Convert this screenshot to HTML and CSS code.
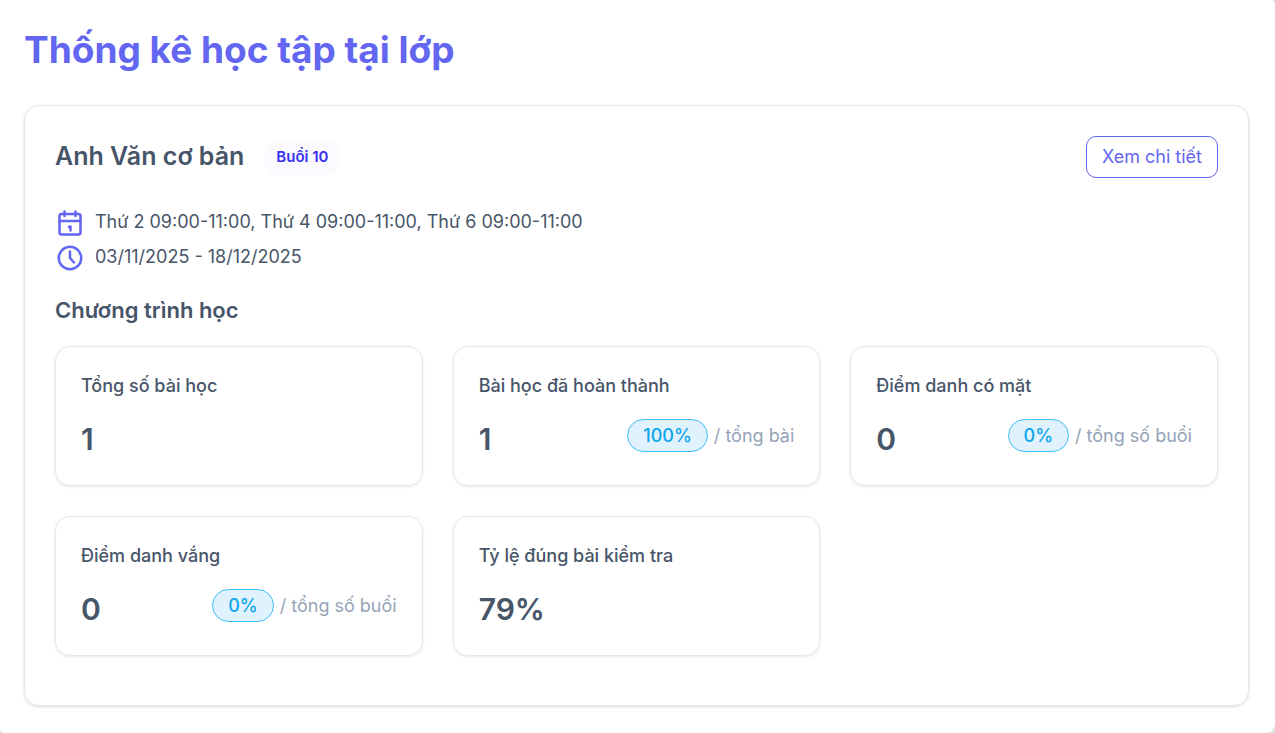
FILE: index.html
```html
<!DOCTYPE html>
<html lang="vi">

<head>
    <meta charset="UTF-8">
    <meta name="viewport" content="width=device-width, initial-scale=1.0">
    <title>Thống kê học tập tại lớp</title>
    <link rel="stylesheet" href="styles.css">
</head>

<body>
    <main class="page">
        <h1 class="page-title">Thống kê học tập tại lớp</h1>

        <section class="course">
            <div class="course-header">
                <h2 class="course-name">Anh Văn cơ bản</h2>
                <span class="session">Buổi 10</span>
                <button type="button" class="detail-btn">Xem chi tiết</button>
            </div>

            <ul class="schedule">
                <li>
                    <svg class="icon" viewBox="0 0 30 30" fill="none" stroke="currentColor" stroke-width="2.5" stroke-linecap="round" stroke-linejoin="round">
                        <rect x="4.5" y="6" width="21" height="20.5" rx="2" />
                        <path d="M4.5 13h21M9.5 3.500v4.500M20.500 3.500v4.500M14 19l1.500-.5v4" />
                    </svg>
                    <span>Thứ 2 09:00-11:00, Thứ 4 09:00-11:00, Thứ 6 09:00-11:00</span>
                </li>
                <li>
                    <svg class="icon" viewBox="0 0 30 30" fill="none" stroke="currentColor" stroke-width="2.5" stroke-linecap="round" stroke-linejoin="round">
                        <circle cx="15" cy="15" r="11.25" />
                        <path d="M15 8.500v6.500l4 4.500" />
                    </svg>
                    <span>03/11/2025 - 18/12/2025</span>
                </li>
            </ul>

            <h3 class="section-title">Chương trình học</h3>

            <div class="stats">
                <div class="stat">
                    <p class="stat-label">Tổng số bài học</p>
                    <div class="stat-row">
                        <span class="stat-value">1</span>
                    </div>
                </div>
                <div class="stat">
                    <p class="stat-label">Bài học đã hoàn thành</p>
                    <div class="stat-row">
                        <span class="stat-value">1</span>
                        <div class="ratio"><span class="percent">100%</span><span>/ tổng bài</span></div>
                    </div>
                </div>
                <div class="stat">
                    <p class="stat-label">Điểm danh có mặt</p>
                    <div class="stat-row">
                        <span class="stat-value">0</span>
                        <div class="ratio"><span class="percent">0%</span><span>/ tổng số buổi</span></div>
                    </div>
                </div>
                <div class="stat">
                    <p class="stat-label">Điểm danh vắng</p>
                    <div class="stat-row">
                        <span class="stat-value">0</span>
                        <div class="ratio"><span class="percent">0%</span><span>/ tổng số buổi</span></div>
                    </div>
                </div>
                <div class="stat">
                    <p class="stat-label">Tỷ lệ đúng bài kiểm tra</p>
                    <div class="stat-row">
                        <span class="stat-value">79%</span>
                    </div>
                </div>
            </div>
        </section>
    </main>
</body>

</html>
```
FILE: styles.css
```css
* {
    box-sizing: border-box;
}

body {
    margin: 0;
    background: #e5e5e5;
    color: #475569;
    font-family: Inter, "Noto Sans", sans-serif;
    font-size: 18px;
    line-height: 25px;
}

h1,
h2,
h3,
p,
ul {
    margin: 0;
    padding: 0;
}

.page {
    min-height: 100vh;
    padding: 25px 26px 26px 24px;
    background: #fff;
    border-radius: 0 5px 10px 5px;
}

.page-title {
    margin-bottom: 30px;
    color: #6366f1;
    font-size: 37px;
    font-weight: 700;
    line-height: 50px;
}

.course {
    padding: 30px 30px 49px;
    border: 1px solid #e5e7eb;
    border-radius: 15px;
    box-shadow: 0 1px 3px rgba(0, 0, 0, .15);
}

.course-header {
    display: flex;
    align-items: center;
    margin-bottom: 30px;
}

.course-name {
    padding-bottom: 2px;
    font-size: 25px;
    font-weight: 600;
    line-height: 30px;
}

.session {
    margin-left: 20px;
    padding: 5px 12px 7px;
    border-radius: 20px;
    background: #fafaff;
    color: #3730f0;
    font-size: 15px;
    font-weight: 600;
}

.detail-btn {
    margin-left: auto;
    padding: 7px 15px;
    border: 1px solid #6366f1;
    border-radius: 10px;
    background: #fff;
    color: #6366f1;
    font: inherit;
    line-height: 26px;
    cursor: pointer;
}

.schedule {
    list-style: none;
}

.schedule li {
    display: flex;
    gap: 10px;
    margin-bottom: 5px;
    line-height: 28px;
}

.icon {
    width: 30px;
    height: 30px;
    color: #6366f1;
}

.section-title {
    margin: 22px 0 21px;
    font-size: 22px;
    font-weight: 600;
    line-height: 30px;
}

.stats {
    display: grid;
    grid-template-columns: repeat(3, 1fr);
    gap: 30px;
}

.stat {
    padding: 25px;
    border: 1px solid #e5e7eb;
    border-radius: 15px;
    box-shadow: 0 1px 3px rgba(0, 0, 0, .1);
}

.stat-label {
    margin-bottom: 20px;
    font-weight: 500;
    line-height: 27px;
}

.stat-row {
    display: flex;
    justify-content: space-between;
}

.stat-value {
    font-size: 30px;
    font-weight: 600;
    line-height: 41px;
}

.ratio {
    display: flex;
    align-items: center;
    align-self: flex-start;
    gap: 6px;
    color: #94a3b8;
}

.percent {
    padding: 3px 15px;
    border: 1px solid #38bdf8;
    border-radius: 20px;
    background: #e0f2fe;
    color: #0ea5e9;
    font-weight: 500;
}
```
